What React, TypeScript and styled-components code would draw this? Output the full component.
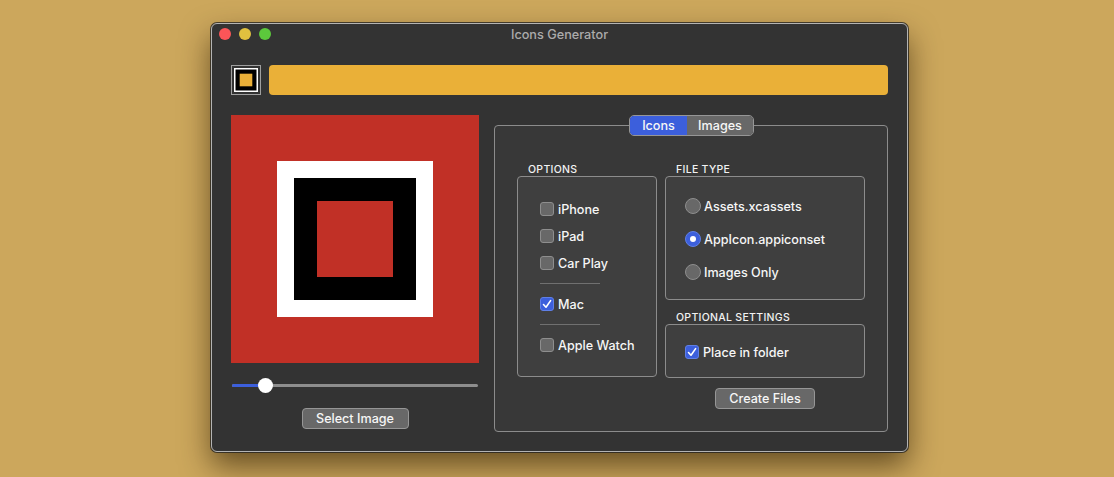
import { createGlobalStyle } from "styled-components";
import styled from "styled-components";

const GlobalStyle = createGlobalStyle`
  html, body {
    margin: 0;
    height: 100%;
    overflow: hidden;
    background: #cca75c;
    font-family: Inter, "Liberation Sans", sans-serif;
    -webkit-font-smoothing: antialiased;
  }
`;

const Page = styled.div`
  height: 477px;
  padding: 23px 0 0 211px;
  box-sizing: border-box;
`;

const Window = styled.div`
  width: 697px;
  height: 429px;
  box-sizing: border-box;
  border: 1px solid #b4b4b4;
  border-radius: 6px;
  background: #333333;
  box-shadow: 0 0 0 1px rgba(30, 30, 30, 0.75), 0 14px 30px rgba(40, 25, 0, 0.62);
`;

const TitleBar = styled.div`
  position: relative;
  height: 21px;
  display: flex;
  align-items: center;
  justify-content: center;
  color: #ababab;
  font-size: 12.7px;
  font-weight: 450;
`;

const Lights = styled.div`
  position: absolute;
  left: 7px;
  top: 4px;
  display: flex;
  gap: 8px;
`;

const Light = styled.span<{ $color: string }>`
  width: 12px;
  height: 12px;
  border-radius: 50%;
  background: ${(p) => p.$color};
`;

const Content = styled.div`
  padding: 20px 19px 0;
`;

const TopRow = styled.div`
  display: flex;
  gap: 8px;
  height: 30px;
`;

const Well = styled.div`
  width: 30px;
  height: 30px;
  box-sizing: border-box;
  border: 1px solid #a0a0a0;
  display: flex;
  align-items: center;
  justify-content: center;
`;

const ColorBar = styled.div`
  flex: 1;
  border-radius: 4px;
  background: #eab038;
`;

const MainRow = styled.div`
  display: flex;
  gap: 15px;
  margin-top: 20px;
`;

const LeftColumn = styled.div`
  width: 248px;
  display: flex;
  flex-direction: column;
  align-items: center;
`;

const Preview = styled.div`
  width: 248px;
  height: 248px;
  background: #c13026;
  display: flex;
  align-items: center;
  justify-content: center;
`;

const Slider = styled.div`
  position: relative;
  width: 246px;
  height: 16px;
  margin-top: 14px;
  display: flex;
  align-items: center;
`;

const Track = styled.div`
  width: 100%;
  height: 3px;
  border-radius: 2px;
  background: #8e8e8e;
  overflow: hidden;
`;

const TrackFill = styled.div`
  height: 100%;
  background: #3c5fdc;
`;

const Thumb = styled.div`
  position: absolute;
  top: 1px;
  width: 15px;
  height: 15px;
  margin-left: -7.5px;
  border-radius: 50%;
  background: #ffffff;
`;

const Button = styled.button<{ $width: number }>`
  display: block;
  width: ${(p) => p.$width}px;
  height: 21px;
  padding: 0;
  border: 1px solid #969696;
  border-radius: 4px;
  background: #686868;
  color: #f6f6f6;
  font: 450 12.6px Inter, "Liberation Sans", sans-serif;
`;

const LeftButton = styled(Button)`
  margin-top: 15px;
`;

const Panel = styled.div`
  position: relative;
  flex: 1;
  height: 307px;
  margin-top: 10px;
  box-sizing: border-box;
  padding: 36px 0 0 22px;
  border: 1px solid #8c8c8c;
  border-radius: 4px;
  background: #383838;
  display: flex;
  gap: 8px;
`;

const Tabs = styled.div`
  position: absolute;
  top: -11px;
  left: 134px;
  width: 125px;
  height: 21px;
  box-sizing: border-box;
  border: 1px solid #969696;
  border-radius: 5px;
  overflow: hidden;
  display: flex;
`;

const Tab = styled.div<{ $active?: boolean; $width: number }>`
  width: ${(p) => p.$width}px;
  display: flex;
  align-items: center;
  justify-content: center;
  background: ${(p) => (p.$active ? "#3c5fdc" : "#686868")};
  color: #f6f6f6;
  font-size: 12.6px;
  font-weight: 450;
`;

const Column = styled.div<{ $width: number }>`
  width: ${(p) => p.$width}px;
  display: flex;
  flex-direction: column;
`;

const SectionLabel = styled.div<{ $gapTop?: number }>`
  height: 14px;
  line-height: 16px;
  margin-top: ${(p) => p.$gapTop ?? 0}px;
  padding-left: 11px;
  color: #f2f2f2;
  font-size: 10.5px;
  font-weight: 450;
  letter-spacing: 0.3px;
`;

const GroupBox = styled.div<{ $height: number }>`
  height: ${(p) => p.$height}px;
  box-sizing: border-box;
  border: 1px solid #8c8c8c;
  border-radius: 4px;
  background: #3f3f3f;
`;

const OptionsBox = styled(GroupBox)`
  padding: 19px 0 0 22px;
`;

const FileTypeBox = styled(GroupBox)`
  padding: 13px 0 0 19px;
`;

const SettingsBox = styled(GroupBox)`
  padding: 2px 0 0 19px;
  display: flex;
  align-items: center;
`;

const Row = styled.div<{ $height: number; $gap: number }>`
  height: ${(p) => p.$height}px;
  display: flex;
  align-items: center;
  gap: ${(p) => p.$gap}px;
  color: #f6f6f6;
  font-size: 12.6px;
  font-weight: 450;
`;

const Divider = styled.div<{ $before: number; $after: number }>`
  width: 60px;
  height: 1px;
  margin: ${(p) => p.$before}px 0 ${(p) => p.$after}px;
  background: #707070;
`;

const CheckMark = styled.span<{ $checked?: boolean }>`
  width: 14px;
  height: 14px;
  margin-top: -1px;
  box-sizing: border-box;
  border: 1px solid ${(p) => (p.$checked ? "#5f7fe6" : "#8e8e8e")};
  border-radius: 3px;
  background: ${(p) => (p.$checked ? "#3c5fdc" : "#686868")};
  display: flex;
  align-items: center;
  justify-content: center;
`;

const RadioMark = styled.span<{ $checked?: boolean }>`
  width: 16px;
  height: 16px;
  margin-top: -1px;
  box-sizing: border-box;
  border: 1px solid ${(p) => (p.$checked ? "#5f7fe6" : "#8e8e8e")};
  border-radius: 50%;
  background: ${(p) => (p.$checked ? "#3c5fdc" : "#686868")};
  display: flex;
  align-items: center;
  justify-content: center;
  &::after {
    content: "";
    display: ${(p) => (p.$checked ? "block" : "none")};
    width: 6px;
    height: 6px;
    border-radius: 50%;
    background: #ffffff;
  }
`;

const CreateButton = styled(Button)`
  margin: 10px auto 0;
`;

function Logo() {
  return (
    <svg width="156" height="156" viewBox="0 0 156 156">
      <rect width="156" height="156" fill="#ffffff" />
      <rect x="17" y="17" width="122" height="122" fill="#000000" />
      <rect x="40" y="40" width="76" height="76" fill="#c13026" />
    </svg>
  );
}

function SmallLogo() {
  return (
    <svg width="24" height="24" viewBox="0 0 24 24">
      <rect width="24" height="24" fill="#ffffff" />
      <rect x="1.5" y="1.5" width="21" height="21" fill="#000000" />
      <rect x="5.7" y="5.7" width="12.6" height="12.6" fill="#eab038" />
    </svg>
  );
}

function Check({ label, checked }: { label: string; checked?: boolean }) {
  return (
    <Row $height={27} $gap={4}>
      <CheckMark $checked={checked}>
        {checked && (
          <svg width="10" height="10" viewBox="0 0 10 10" fill="none">
            <path d="M1.5 5.5 L4 8.2 L8.6 1.6" stroke="#fff" strokeWidth="1.6" strokeLinecap="round" strokeLinejoin="round" />
          </svg>
        )}
      </CheckMark>
      {label}
    </Row>
  );
}

function Radio({ label, checked }: { label: string; checked?: boolean }) {
  return (
    <Row $height={33} $gap={3}>
      <RadioMark $checked={checked} />
      {label}
    </Row>
  );
}

export default function App() {
  const sliderValue = 13.6;

  return (
    <Page>
      <GlobalStyle />
      <Window>
        <TitleBar>
          <Lights>
            <Light $color="#fc5558" />
            <Light $color="#e0c13f" />
            <Light $color="#5cc93c" />
          </Lights>
          Icons Generator
        </TitleBar>
        <Content>
          <TopRow>
            <Well>
              <SmallLogo />
            </Well>
            <ColorBar />
          </TopRow>
          <MainRow>
            <LeftColumn>
              <Preview>
                <Logo />
              </Preview>
              <Slider>
                <Track>
                  <TrackFill style={{ width: `${sliderValue}%` }} />
                </Track>
                <Thumb style={{ left: `${sliderValue}%` }} />
              </Slider>
              <LeftButton $width={107}>Select Image</LeftButton>
            </LeftColumn>
            <Panel>
              <Tabs>
                <Tab $active $width={57}>Icons</Tab>
                <Tab $width={66}>Images</Tab>
              </Tabs>
              <Column $width={140}>
                <SectionLabel>OPTIONS</SectionLabel>
                <OptionsBox $height={201}>
                  <Check label="iPhone" />
                  <Check label="iPad" />
                  <Check label="Car Play" />
                  <Divider $before={6} $after={7} />
                  <Check label="Mac" checked />
                  <Divider $before={6} $after={7} />
                  <Check label="Apple Watch" />
                </OptionsBox>
              </Column>
              <Column $width={200}>
                <SectionLabel>FILE TYPE</SectionLabel>
                <FileTypeBox $height={124}>
                  <Radio label="Assets.xcassets" />
                  <Radio label="AppIcon.appiconset" checked />
                  <Radio label="Images Only" />
                </FileTypeBox>
                <SectionLabel $gapTop={10}>OPTIONAL SETTINGS</SectionLabel>
                <SettingsBox $height={54}>
                  <Check label="Place in folder" checked />
                </SettingsBox>
                <CreateButton $width={100}>Create Files</CreateButton>
              </Column>
            </Panel>
          </MainRow>
        </Content>
      </Window>
    </Page>
  );
}
